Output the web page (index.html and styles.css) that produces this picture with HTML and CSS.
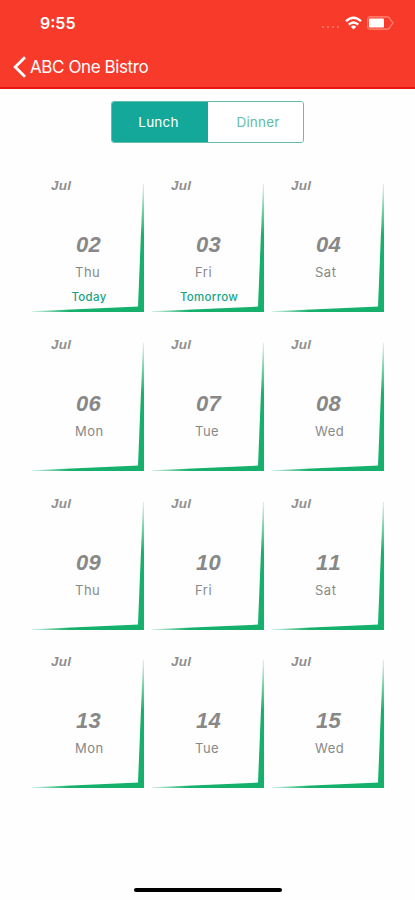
FILE: index.html
```html
<!DOCTYPE html>
<html lang="en">
<head>
<meta charset="utf-8">
<title>ABC One Bistro</title>
<meta name="viewport" content="width=device-width, initial-scale=1">
<link rel="stylesheet" href="styles.css">
</head>
<body>
<svg width="0" height="0" class="defs" aria-hidden="true">
  <defs>
    <linearGradient id="gv" x1="0" y1="0" x2="0" y2="1">
      <stop offset="0" stop-color="#12b06b" stop-opacity=".15"/><stop offset=".4" stop-color="#14b06c"/><stop offset="1" stop-color="#14b06c"/>
    </linearGradient>
    <linearGradient id="gh" x1="0" y1="0" x2="1" y2="0">
      <stop offset="0" stop-color="#12b06b" stop-opacity=".2"/><stop offset=".35" stop-color="#14b06c"/><stop offset="1" stop-color="#14b06c"/>
    </linearGradient>
    <symbol id="edge" viewBox="0 0 113 130">
      <path d="M112 2 L113 2 V130 H107 V125Z" fill="url(#gv)"/>
      <path d="M1 129.2 L108 124.5 V130 H1Z" fill="url(#gh)"/>
    </symbol>
  </defs>
</svg>
<header class="header">
  <div class="status">
    <span class="time">9:55</span>
    <span class="indicators">
      <span class="dots"><i></i><i></i><i></i><i></i></span>
      <svg class="wifi" width="17" height="14" viewBox="0 0 17 14" fill="none" stroke="#fff" stroke-width="2.4">
        <path d="M1 5.2Q8.500-1.800 16 5.200"/><path d="M3.800 8.600Q8.500 4.200 13.200 8.600"/><path d="M8.500 13.500L5.800 10.700Q8.500 8.500 11.200 10.700Z" fill="#fff" stroke="none"/>
      </svg>
      <svg class="battery" width="27" height="14" viewBox="0 0 27 14">
        <path d="M3 .8H20.500Q22.500 .8 23 3L26 7L23 11Q22.500 13.200 20.500 13.200H3Q.8 13.200 .8 11V3Q.8 .8 3 .8Z" fill="none" stroke="#ff8b78" stroke-width="1.200"/>
        <rect x="2" y="2.500" width="15" height="9" rx="1" fill="#fff"/>
      </svg>
    </span>
  </div>
  <div class="nav">
    <svg width="14" height="22" viewBox="0 0 14 22" fill="none" stroke="#fff" stroke-width="2.800"><path d="M12 1.200L2.200 11L12 20.800"/></svg>
    <span class="title">ABC One Bistro</span>
  </div>
</header>
<main>
  <div class="tabs"><button class="tab active">Lunch</button><button class="tab">Dinner</button></div>
  <div class="grid">
    <div class="card"><svg class="edge"><use href="#edge"/></svg><span class="month">Jul</span><span class="date">02</span><span class="day">Thu</span><span class="note">Today</span></div>
    <div class="card"><svg class="edge"><use href="#edge"/></svg><span class="month">Jul</span><span class="date">03</span><span class="day">Fri</span><span class="note">Tomorrow</span></div>
    <div class="card"><svg class="edge"><use href="#edge"/></svg><span class="month">Jul</span><span class="date">04</span><span class="day">Sat</span></div>
    <div class="card"><svg class="edge"><use href="#edge"/></svg><span class="month">Jul</span><span class="date">06</span><span class="day">Mon</span></div>
    <div class="card"><svg class="edge"><use href="#edge"/></svg><span class="month">Jul</span><span class="date">07</span><span class="day">Tue</span></div>
    <div class="card"><svg class="edge"><use href="#edge"/></svg><span class="month">Jul</span><span class="date">08</span><span class="day">Wed</span></div>
    <div class="card"><svg class="edge"><use href="#edge"/></svg><span class="month">Jul</span><span class="date">09</span><span class="day">Thu</span></div>
    <div class="card"><svg class="edge"><use href="#edge"/></svg><span class="month">Jul</span><span class="date">10</span><span class="day">Fri</span></div>
    <div class="card"><svg class="edge"><use href="#edge"/></svg><span class="month">Jul</span><span class="date">11</span><span class="day">Sat</span></div>
    <div class="card"><svg class="edge"><use href="#edge"/></svg><span class="month">Jul</span><span class="date">13</span><span class="day">Mon</span></div>
    <div class="card"><svg class="edge"><use href="#edge"/></svg><span class="month">Jul</span><span class="date">14</span><span class="day">Tue</span></div>
    <div class="card"><svg class="edge"><use href="#edge"/></svg><span class="month">Jul</span><span class="date">15</span><span class="day">Wed</span></div>
  </div>
</main>
<footer class="home"><div class="home-bar"></div></footer>
</body>
</html>
```

FILE: styles.css
```css
* { box-sizing: border-box; }
body {
  margin: 0;
  height: 900px;
  display: flex;
  flex-direction: column;
  background: #fefefe;
  font-family: Inter, "Liberation Sans", sans-serif;
  overflow: hidden;
}
.defs { position: absolute; }
.header {
  height: 89px;
  background: #f83a2a;
  border-bottom: 2px solid #ea1410;
  color: #fff;
}
.status {
  height: 46px;
  padding: 0 21px 0 40px;
  display: flex;
  align-items: center;
  justify-content: space-between;
}
.time { font-size: 16px; font-weight: 600; line-height: 20px; }
.indicators { display: flex; align-items: center; }
.dots { display: flex; gap: 3px; padding-top: 8px; margin-right: 6px; }
.dots i { width: 2px; height: 2px; background: #fb6d5c; }
.wifi { margin-right: 5px; }
.nav {
  height: 42px;
  padding-left: 13px;
  display: flex;
  align-items: center;
  gap: 3px;
}
.title { font-size: 17px; letter-spacing: -0.4px; line-height: 22px; }
main { flex: 1; }
.tabs {
  width: 193px;
  height: 42px;
  margin: 12px 0 0 111px;
  display: grid;
  grid-template-columns: 96px 95px;
  border: 1px solid #63bda9;
  border-radius: 3px;
  overflow: hidden;
}
.tab {
  border: 0;
  padding: 0 0 0 5px;
  background: #fff;
  color: #62bca8;
  font: 13.500px/20px Inter, sans-serif;
  letter-spacing: .2px;
}
.tab.active { padding: 0 3px 0 0; background: #13a89a; color: #fff; }
.grid {
  margin: 34px 0 0 31px;
  display: grid;
  grid-template-columns: repeat(3, 113px);
  grid-auto-rows: 135px;
  column-gap: 7px;
  row-gap: 23.800px;
}
.card {
  position: relative;
  display: grid;
  grid-template-rows: 17px 40px 22px 30px 21px;
  color: #888;
}
.edge { position: absolute; left: 0; bottom: 0; width: 113px; height: 130px; }
.month { padding-left: 20px; font: italic bold 13.500px/17px "Liberation Sans", sans-serif; color: #909090; letter-spacing: .3px; }
.date { grid-row: 3; padding-left: 45px; font: italic bold 22px/22px "Liberation Sans", sans-serif; font-kerning: none; letter-spacing: .3px; }
.day { grid-row: 4; padding-left: 44px; font-size: 13px; line-height: 32px; letter-spacing: .5px; }
.note { grid-row: 5; padding-left: 3px; text-align: center; font-size: 11.500px; font-weight: 500; line-height: 23px; color: #18a387; letter-spacing: .3px; }
.home { height: 12px; display: flex; justify-content: center; }
.home-bar { width: 148px; height: 4px; border-radius: 2px; background: #000; }
```
